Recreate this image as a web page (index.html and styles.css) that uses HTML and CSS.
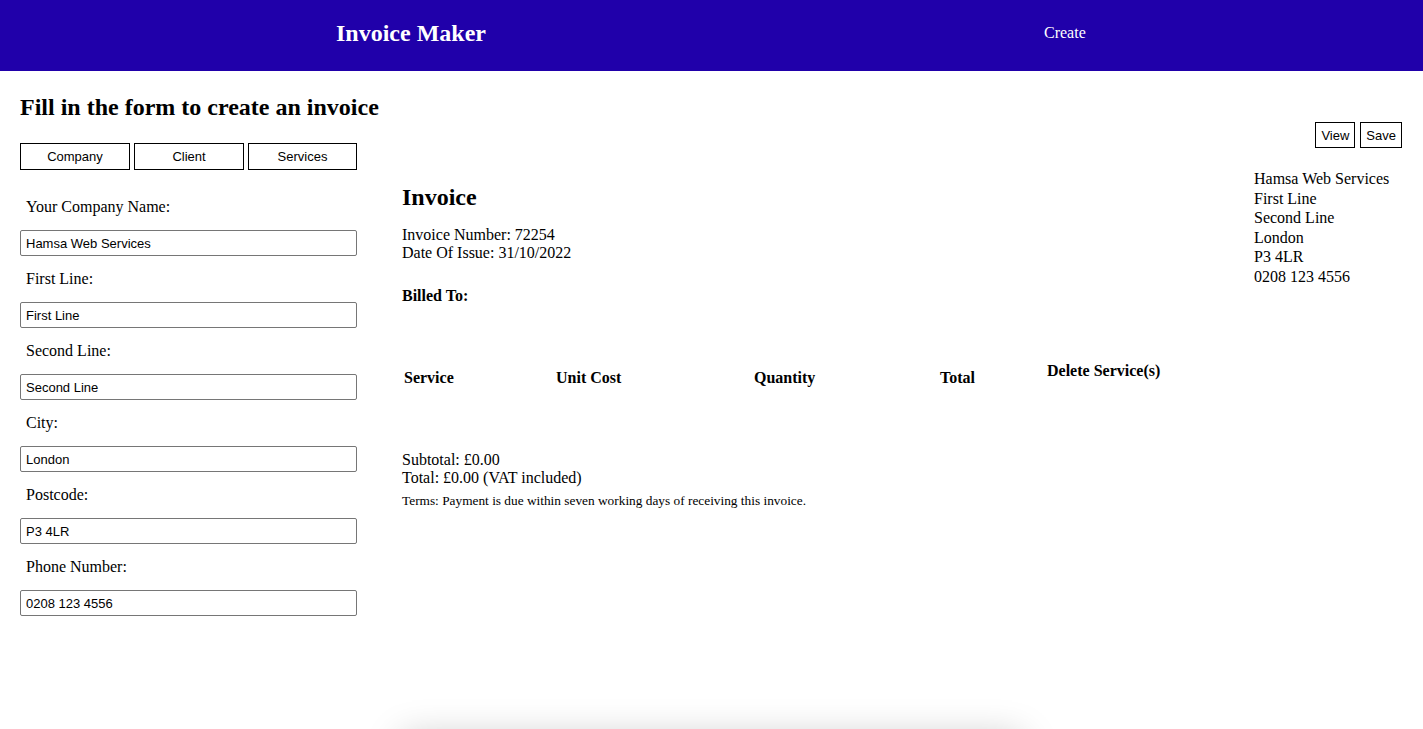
FILE: index.html
```html
<!DOCTYPE html>
<html>
<head>
<meta charset="utf-8">
<title>Invoice Maker</title>
<link rel="stylesheet" href="styles.css">
</head>
<body>
<header class="topbar">
  <div class="brand">Invoice Maker</div>
  <nav class="nav"><a class="nav-link" href="#">Create</a></nav>
</header>
<main class="main">
  <section class="form-col">
    <h2 class="form-title">Fill in the form to create an invoice</h2>
    <div class="tabs">
      <button class="tab">Company</button>
      <button class="tab">Client</button>
      <button class="tab">Services</button>
    </div>
    <form class="form">
      <label class="field-label">Your Company Name:</label>
      <input class="field-input" type="text" value="Hamsa Web Services">
      <label class="field-label">First Line:</label>
      <input class="field-input" type="text" value="First Line">
      <label class="field-label">Second Line:</label>
      <input class="field-input" type="text" value="Second Line">
      <label class="field-label">City:</label>
      <input class="field-input" type="text" value="London">
      <label class="field-label">Postcode:</label>
      <input class="field-input" type="text" value="P3 4LR">
      <label class="field-label">Phone Number:</label>
      <input class="field-input" type="text" value="0208 123 4556">
    </form>
  </section>
  <section class="preview-col">
    <div class="toolbar">
      <button class="tool-btn">View</button>
      <button class="tool-btn">Save</button>
    </div>
    <div class="invoice-head">
      <div class="invoice-info">
        <h2 class="invoice-title">Invoice</h2>
        <p class="invoice-meta">Invoice Number: 72254<br>Date Of Issue: 31/10/2022</p>
        <h4 class="billed">Billed To:</h4>
      </div>
      <div class="company-address">
        <div>Hamsa Web Services</div>
        <div>First Line</div>
        <div>Second Line</div>
        <div>London</div>
        <div>P3 4LR</div>
        <div>0208 123 4556</div>
      </div>
    </div>
    <table class="services">
      <thead>
        <tr>
          <th class="col-service">Service</th>
          <th class="col-unit">Unit Cost</th>
          <th class="col-qty">Quantity</th>
          <th class="col-total">Total</th>
          <th class="col-delete">Delete Service(s)</th>
        </tr>
      </thead>
    </table>
    <div class="totals">
      <div>Subtotal: £0.00</div>
      <div>Total: £0.00 (VAT included)</div>
    </div>
    <p class="terms">Terms: Payment is due within seven working days of receiving this invoice.</p>
    <div class="sheet"></div>
  </section>
</main>
</body>
</html>
```
FILE: styles.css
```css
* { box-sizing: border-box; }
html, body { margin: 0; padding: 0; }
body {
  font-family: "Liberation Serif", "Times New Roman", serif;
  font-size: 16px;
  color: #000;
  background: #fff;
  overflow: hidden;
}
.topbar {
  height: 71px;
  background: #2000aa;
  color: #fff;
  display: flex;
  align-items: center;
}
.brand {
  font-weight: bold;
  font-size: 24px;
  margin-left: 336px;
  width: 150px;
  margin-top: -5px;
  white-space: nowrap;
}
.nav { margin-left: 558px; margin-top: -6px; }
.nav-link { color: #fff; text-decoration: none; font-size: 16px; }

.main { display: flex; align-items: flex-start; }
.form-col { width: 357px; padding-left: 20px; flex: none; }
.form-title {
  font-size: 24px;
  font-weight: bold;
  margin: 22px 0 0;
  line-height: 28px;
  white-space: nowrap;
}
.tabs {
  display: grid;
  grid-template-columns: 110px 110px 109px;
  gap: 4px;
  margin-top: 22px;
}
.tab {
  height: 27px;
  background: #fff;
  border: 1px solid #000;
  font-family: "Liberation Sans", Arial, sans-serif;
  font-size: 13px;
  color: #000;
  padding: 0;
}
.form { display: flex; flex-direction: column; margin-top: 14px; }
.field-label {
  display: block;
  padding: 14px 6px 14px;
  line-height: 18px;
}
.field-input {
  height: 26px;
  width: 337px;
  border: 1px solid #767676;
  border-radius: 2px;
  font-family: "Liberation Sans", Arial, sans-serif;
  font-size: 13px;
  padding: 0 5px;
  color: #000;
}

.preview-col { flex: 1; margin-left: 45px; padding-right: 21px; }
.toolbar {
  display: flex;
  justify-content: flex-end;
  gap: 5px;
  margin-top: 51px;
}
.tool-btn {
  height: 26px;
  background: #fff;
  border: 1px solid #000;
  font-family: "Liberation Sans", Arial, sans-serif;
  font-size: 13px;
  color: #000;
  padding: 0 5px;
}
.invoice-head {
  display: flex;
  justify-content: space-between;
  margin-top: 20px;
}
.invoice-title {
  font-size: 24px;
  line-height: 28px;
  margin: 15px 0 0;
}
.invoice-meta { margin: 15px 0 0; line-height: 18px; }
.billed { margin: 25px 0 0; font-size: 16px; line-height: 18px; }
.company-address { width: 148px; line-height: 19.5px; padding-top: 1px; }

.services { border-collapse: collapse; margin-top: 57px; }
.services th {
  text-align: left;
  font-size: 16px;
  padding: 7px 2px;
  line-height: 18px;
  vertical-align: middle;
}
.col-service { width: 152px; }
.col-unit { width: 198px; }
.col-qty { width: 186px; }
.col-total { width: 107px; }
.services th.col-delete { vertical-align: top; padding-top: 0; padding-bottom: 14px; }

.totals { margin-top: 57px; line-height: 18px; }
.terms { margin: 6px 0 0; font-size: 13.333px; line-height: 16px; }
.sheet {
  width: 620px;
  height: 200px;
  margin-top: 228px;
  background: #fff;
  box-shadow: 0 0 35px rgba(0,0,0,0.22);
}
```
